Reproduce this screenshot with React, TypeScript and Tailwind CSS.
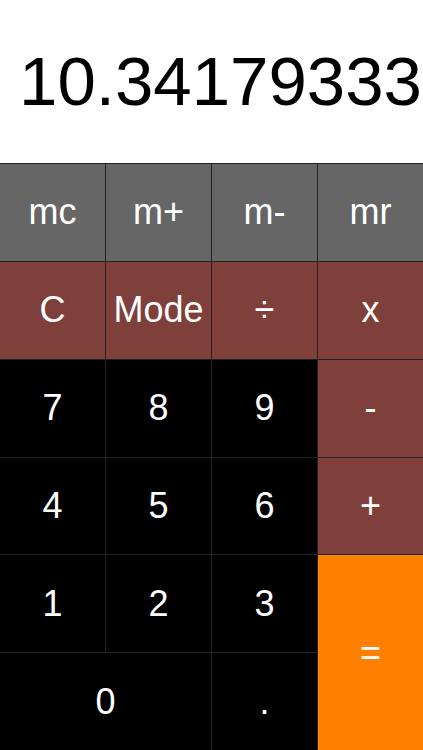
import React from "react";

type K = { label: string; cls: string; span?: string };

const gray = "bg-[#666666]";
const red = "bg-[#7f403b]";
const black = "bg-black";
const orange = "bg-[#ff8000]";

const keys: K[] = [
  { label: "mc", cls: gray },
  { label: "m+", cls: gray },
  { label: "m-", cls: gray },
  { label: "mr", cls: gray },
  { label: "C", cls: red },
  { label: "Mode", cls: red },
  { label: "÷", cls: red },
  { label: "x", cls: red },
  { label: "7", cls: black },
  { label: "8", cls: black },
  { label: "9", cls: black },
  { label: "-", cls: red },
  { label: "4", cls: black },
  { label: "5", cls: black },
  { label: "6", cls: black },
  { label: "+", cls: red },
  { label: "1", cls: black },
  { label: "2", cls: black },
  { label: "3", cls: black },
  { label: "=", cls: orange, span: "row-span-2" },
  { label: "0", cls: black, span: "col-span-2" },
  { label: ".", cls: black },
];

export default function App() {
  return (
    <div
      className="w-[423px] h-[750px] flex flex-col bg-white overflow-hidden"
      style={{ fontFamily: '"Liberation Sans", Arial, sans-serif' }}
    >
      <div className="h-[163px] flex items-center justify-end pr-[1px]">
        <span className="text-[69px] leading-none text-black">10.34179333</span>
      </div>
      <div className="flex-1 grid grid-cols-4 grid-rows-6 gap-px bg-[#222222] border-t border-[#222222]">
        {keys.map((k, i) => (
          <div
            key={i}
            className={`${k.cls} ${k.span ?? ""} flex items-center justify-center text-white text-[36px] leading-none`}
          >
            {k.label}
          </div>
        ))}
      </div>
    </div>
  );
}
